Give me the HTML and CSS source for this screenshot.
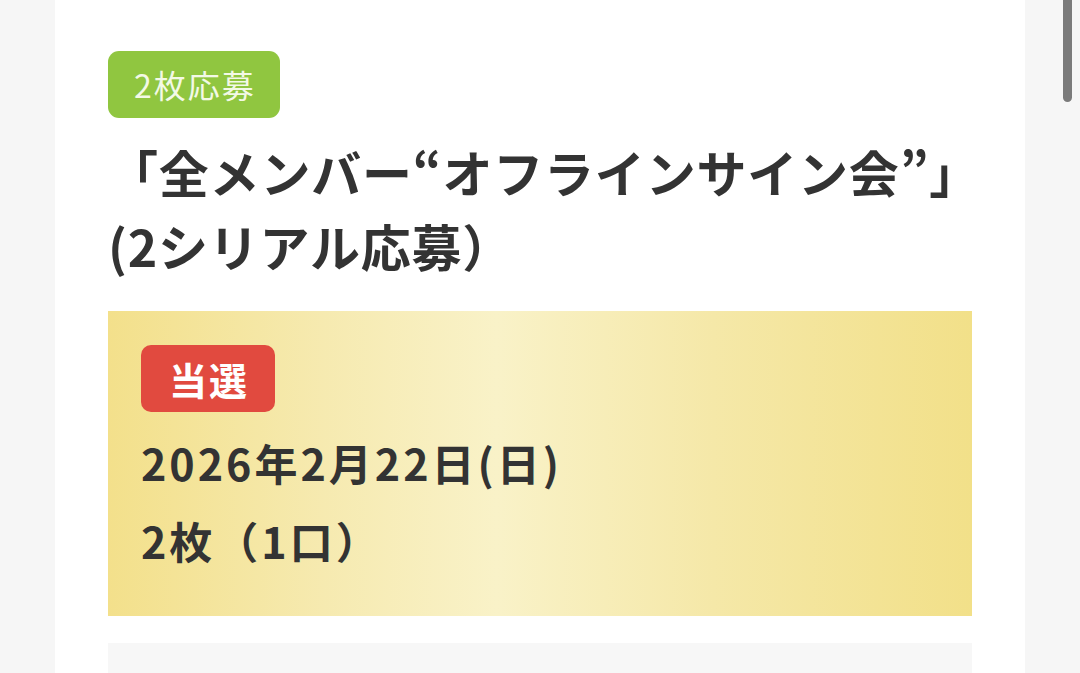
FILE: index.html
```html
<!DOCTYPE html>
<html lang="ja">
<head>
<meta charset="utf-8">
<title>応募</title>
<link rel="stylesheet" href="styles.css">
</head>
<body>
<div class="page">
  <main class="card">
    <span class="tag">2枚応募</span>
    <h1 class="title">「全メンバー“オフラインサイン会”」<br>(2シリアル応募）</h1>
    <section class="result">
      <span class="won">当選</span>
      <p class="date">2026年2月22日(日)</p>
      <p class="count">2枚（1口）</p>
    </section>
    <section class="next"></section>
  </main>
</div>
<div class="scroll-thumb"></div>
</body>
</html>
```
FILE: styles.css
```css
html, body {
  margin: 0;
  padding: 0;
  height: 100%;
  overflow: hidden;
}
body {
  background: #f6f6f6;
  font-family: "Noto Sans CJK JP", "Noto Sans", "Liberation Sans", sans-serif;
  color: #333333;
}
.page {
  padding: 0 55px;
}
.card {
  background: #ffffff;
  padding: 51px 53px 0 53px;
  min-height: 673px;
  box-sizing: border-box;
  display: flex;
  flex-direction: column;
  align-items: flex-start;
}
.tag {
  display: inline-block;
  background: #90c640;
  color: #f3f9e6;
  font-size: 32px;
  letter-spacing: 2px;
  height: 67px;
  line-height: 67px;
  padding: 0 24px 0 26px;
  border-radius: 11px;
}
.title {
  margin: 16px 0 0 0;
  font-size: 50px;
  letter-spacing: 0.8px;
  line-height: 74px;
  font-weight: 700;
  color: #333333;
  white-space: nowrap;
}
.result {
  align-self: stretch;
  margin-top: 29px;
  padding: 34px 33px 37px 33px;
  background: linear-gradient(90deg, #f3e08b 0%, #f6eab0 25%, #f9f2c8 45%, #f5e8a8 70%, #f2e089 100%);
  display: flex;
  flex-direction: column;
  align-items: flex-start;
}
.won {
  display: inline-block;
  background: #e14a3f;
  color: #ffffff;
  font-size: 38px;
  font-weight: 700;
  height: 67px;
  line-height: 67px;
  padding: 0 26px 0 28px;
  border-radius: 10px;
  letter-spacing: 2px;
}
.date, .count {
  margin: 0;
  font-size: 43px;
  letter-spacing: 3px;
  font-weight: 700;
  line-height: 78px;
}
.date {
  margin-top: 11px;
}
.next {
  align-self: stretch;
  margin-top: 27px;
  height: 60px;
  background: #f7f7f7;
}
.scroll-thumb {
  position: absolute;
  top: 0;
  left: 1063px;
  width: 9px;
  height: 102px;
  border-radius: 0 0 5px 5px;
  background: #7b7b7b;
}
```
